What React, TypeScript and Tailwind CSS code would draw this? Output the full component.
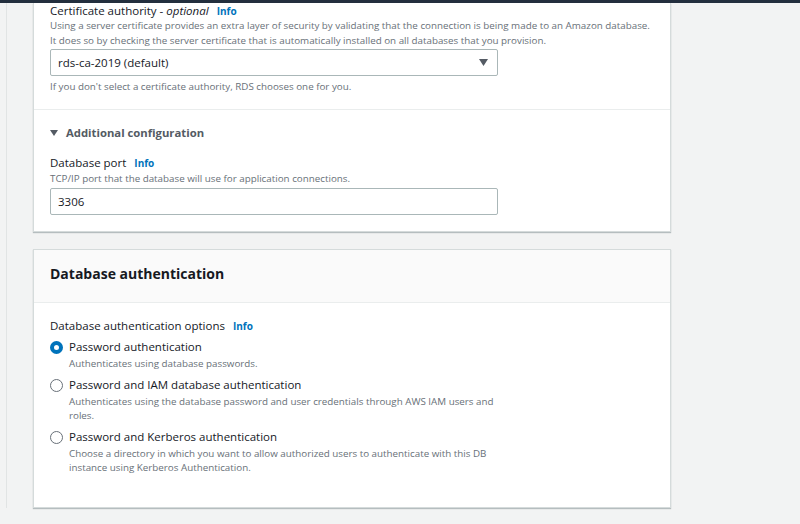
const font = { fontFamily: '"Open Sans", "Liberation Sans", sans-serif' };

function Info() {
  return <span className="ml-[8px] text-[10px] font-bold text-[#0073bb]">Info</span>;
}

function Radio({ checked }: { checked?: boolean }) {
  return checked ? (
    <span className="mt-[2px] box-border block h-[13px] w-[13px] shrink-0 rounded-full border-[4px] border-[#0073bb] bg-white" />
  ) : (
    <span className="mt-[2px] box-border block h-[13px] w-[13px] shrink-0 rounded-full border border-[#687078] bg-white" />
  );
}

const options = [
  {
    title: "Password authentication",
    desc: ["Authenticates using database passwords."],
    checked: true,
  },
  {
    title: "Password and IAM database authentication",
    desc: [
      "Authenticates using the database password and user credentials through AWS IAM users and",
      "roles.",
    ],
  },
  {
    title: "Password and Kerberos authentication",
    desc: [
      "Choose a directory in which you want to allow authorized users to authenticate with this DB",
      "instance using Kerberos Authentication.",
    ],
  },
];

export default function App() {
  return (
    <div className="relative h-[524px] w-[800px] overflow-hidden bg-[#f2f3f3] text-[#16191f]" style={font}>
      <div className="h-[3px] bg-[#232f3e]" />
      <div className="flex">
        <div className="w-[7px] shrink-0 border-r border-[#e1e4e4] bg-[#f2f3f3]" />
        <div className="ml-[26px] flex w-[638px] flex-col">
          {/* connectivity card (top cut off) */}
          <div className="border-r border-b border-l border-[#d5dbdb] bg-white shadow-[0_1px_1px_rgba(0,28,36,0.25)]">
            <div className="px-[16px] pb-[15px]">
              <div className="flex h-[15px] items-baseline text-[11.5px] leading-[15px]">
                <span>Certificate authority -</span>
                <span className="ml-[3px] italic">optional</span>
                <Info />
              </div>
              <p className="text-[9.8px] leading-[15px] text-[#687078]">
                Using a server certificate provides an extra layer of security by validating that the connection is being made to an Amazon database.
                <br />
                It does so by checking the server certificate that is automatically installed on all databases that you provision.
              </p>
              <div className="mt-[1px] flex h-[27px] w-[448px] items-center justify-between rounded-[2px] border border-[#aab7b8] pl-[7px] pr-[9px] text-[11.5px]">
                <span>rds-ca-2019 (default)</span>
                <svg width="9" height="7" viewBox="0 0 9 7">
                  <path d="M0 0h9L4.5 7z" fill="#545b64" />
                </svg>
              </div>
              <p className="mt-[3px] text-[9.8px] leading-[15px] text-[#687078]">
                If you don't select a certificate authority, RDS chooses one for you.
              </p>
            </div>
            <div className="border-t border-[#eaeded] px-[16px] pt-[15px] pb-[16px]">
              <div className="flex h-[16px] items-center text-[11.3px] font-bold text-[#545b64]">
                <svg width="8" height="6" viewBox="0 0 8 6" className="mr-[8px]">
                  <path d="M0 0h8L4 6z" fill="#545b64" />
                </svg>
                Additional configuration
              </div>
              <div className="mt-[14px] flex h-[15px] items-baseline text-[11.5px] leading-[15px]">
                <span>Database port</span>
                <Info />
              </div>
              <p className="mt-[1px] text-[9.8px] leading-[15px] text-[#687078]">
                TCP/IP port that the database will use for application connections.
              </p>
              <div className="mt-[2px] flex h-[27px] w-[448px] items-center rounded-[2px] border border-[#aab7b8] pl-[7px] text-[11.5px]">
                3306
              </div>
            </div>
          </div>

          {/* authentication card */}
          <div className="mt-[17px] h-[259px] border border-[#d5dbdb] bg-white shadow-[0_1px_1px_rgba(0,28,36,0.25)]">
            <div className="h-[53px] border-b border-[#eaeded] bg-[#fafafa] px-[16px] pt-[14px]">
              <h2 className="text-[14px] leading-[20px] font-bold">Database authentication</h2>
            </div>
            <div className="px-[16px] pt-[15px]">
              <div className="flex h-[15px] items-baseline text-[11.5px] leading-[15px]">
                <span>Database authentication options</span>
                <Info />
              </div>
              <div className="mt-[6px] flex flex-col gap-[6px]">
                {options.map((o) => (
                  <div key={o.title} className="flex gap-[6px]">
                    <Radio checked={o.checked} />
                    <div>
                      <div className="text-[11.5px] leading-[16px]">{o.title}</div>
                      <p className="mt-[2px] text-[9.8px] leading-[14px] text-[#687078]">
                        {o.desc.map((d, i) => (
                          <span key={i} className="block">
                            {d}
                          </span>
                        ))}
                      </p>
                    </div>
                  </div>
                ))}
              </div>
            </div>
          </div>
        </div>
      </div>
    </div>
  );
}
